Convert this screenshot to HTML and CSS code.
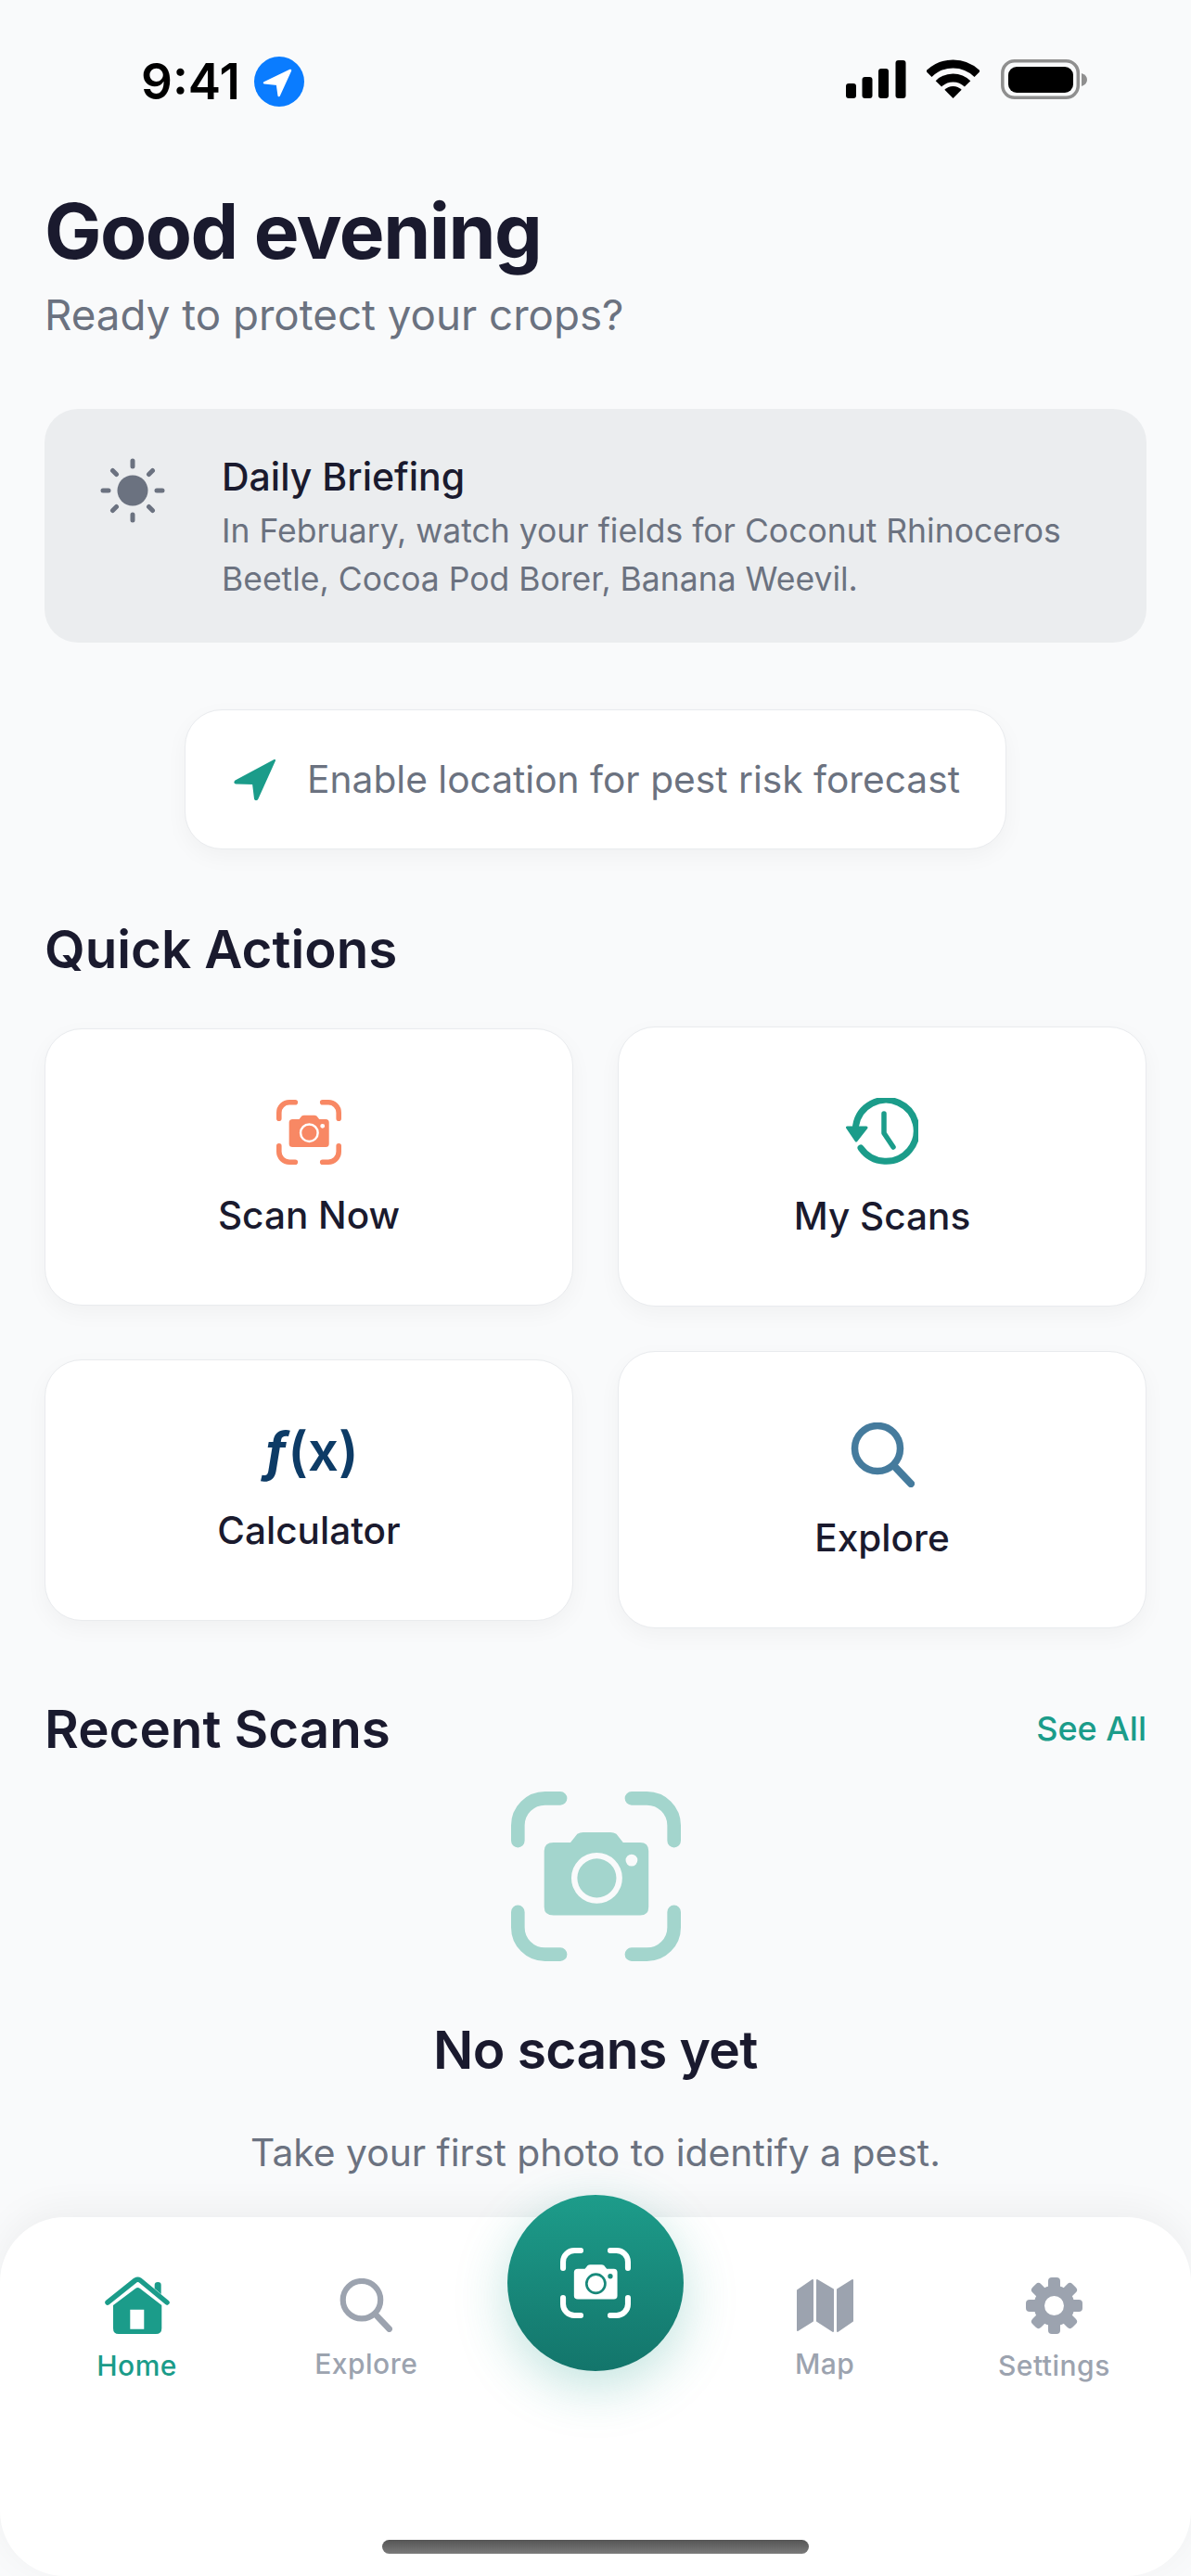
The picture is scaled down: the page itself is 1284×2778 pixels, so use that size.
FILE: index.html
```html
<!DOCTYPE html>
<html lang="en">
<head>
<meta charset="utf-8">
<title>Home</title>
<link rel="stylesheet" href="styles.css">
</head>
<body>
<svg class="defs" width="0" height="0" aria-hidden="true">
  <symbol id="scan-cam" viewBox="0 0 100 100">
    <path class="brackets" d="M4 29V20A16 16 0 0 1 20 4H29M71 4H80A16 16 0 0 1 96 20V29M96 71V80A16 16 0 0 1 80 96H71M29 96H20A16 16 0 0 1 4 80V71"/>
    <path fill="currentColor" fill-rule="evenodd" d="M25 30H35L39 25Q40.500 24 42.500 24H58.500Q60.500 24 62 25L66 30H76Q81 30 81 35V68Q81 73 76 73H25Q19.500 73 19.500 68V35Q19.500 30 25 30ZM35.500 51a15 15 0 1 0 30 0a15 15 0 1 0 -30 0ZM39 51a11.500 11.500 0 1 0 23 0a11.500 11.500 0 1 0 -23 0ZM67.500 40.500a3.500 3.500 0 1 0 7 0a3.500 3.500 0 1 0 -7 0Z"/>
  </symbol>
  <symbol id="search" viewBox="0 0 69 70">
    <circle cx="29" cy="28" r="24.500" fill="none" stroke="currentColor" stroke-width="7.500"/>
    <path d="M47 47L65 66" fill="none" stroke="currentColor" stroke-width="8" stroke-linecap="round"/>
  </symbol>
</svg>
<div class="page">
  <header class="status">
    <div class="status-left">
      <span class="clock">9:41</span>
      <svg class="loc-badge" viewBox="0 0 54 54"><circle cx="27" cy="27" r="27" fill="#0a7cff"/><path d="M39 15L11 28.300L25 29.800L26.700 42Z" fill="#fff" stroke="#fff" stroke-width="2.500" stroke-linejoin="round"/></svg>
    </div>
    <div class="status-right">
      <svg class="signal" viewBox="0 0 65 41"><rect x="0" y="25" width="11" height="16" rx="3"/><rect x="17.500" y="18" width="11" height="23" rx="3"/><rect x="35" y="9" width="11" height="32" rx="3"/><rect x="53.500" y="0" width="11" height="41" rx="3"/></svg>
      <svg class="wifi" viewBox="0 0 57 42"><path d="M2.300 15.800A37 37 0 0 1 54.700 15.800M12.900 26.400A22 22 0 0 1 44.100 26.400" fill="none" stroke="#000" stroke-width="9"/><path d="M28.500 42L19.300 32.800A13 13 0 0 1 37.700 32.800Z"/></svg>
      <svg class="battery" viewBox="0 0 93 43"><rect x="1.800" y="1.800" width="81.500" height="39.400" rx="13" fill="none" stroke="#8f8f8f" stroke-width="3.500"/><rect x="8" y="8" width="70" height="28" rx="9"/><path d="M87 15Q93 17 93 22Q93 27 87 29Z" fill="#8f8f8f"/></svg>
    </div>
  </header>

  <main class="content">
    <h1 class="greeting">Good evening</h1>
    <p class="subtitle">Ready to protect your crops?</p>

    <section class="briefing">
      <svg class="sun" viewBox="0 0 70 70">
        <circle cx="35" cy="35" r="16.500" fill="#6b7280"/>
        <g stroke="#6b7280" stroke-width="5" stroke-linecap="round">
          <path d="M35 3V9M35 61V67M3 35H9M61 35H67M13.500 13.500L17.500 17.500M52.500 52.500L56.500 56.500M56.500 13.500L52.500 17.500M17.500 52.500L13.500 56.500"/>
        </g>
      </svg>
      <div class="briefing-text">
        <h2 class="briefing-title">Daily Briefing</h2>
        <p class="briefing-body">In February, watch your fields for Coconut Rhinoceros Beetle, Cocoa Pod Borer, Banana Weevil.</p>
      </div>
    </section>

    <div class="location-pill">
      <svg class="pill-arrow" viewBox="0 0 47 46"><path d="M45 2L3 24.500Q1.500 26 3.500 26.500L22 27L24 43.500Q25.500 45 26.500 43Z" fill="#1b9c8a" stroke="#1b9c8a" stroke-width="2" stroke-linejoin="round"/></svg>
      <span>Enable location for pest risk forecast</span>
    </div>

    <h2 class="section-title quick-title">Quick Actions</h2>
    <div class="actions">
      <div class="action-col action-col-left">
        <a class="action-card">
          <svg class="icon-scan"><use href="#scan-cam"/></svg>
          <span class="action-label">Scan Now</span>
        </a>
        <a class="action-card">
          <span class="icon-fx"><span class="icon-fx-f">ƒ</span>(x)</span>
          <span class="action-label">Calculator</span>
        </a>
      </div>
      <div class="action-col action-col-right">
        <a class="action-card">
          <svg class="icon-history" viewBox="0 0 78 73">
            <path d="M10.600 30A33 33 0 1 1 16 54" fill="none" stroke="#1b9c8a" stroke-width="7" stroke-linecap="round"/>
            <path d="M1.500 32H22L11 46Z" fill="#1b9c8a" stroke="#1b9c8a" stroke-width="3" stroke-linejoin="round"/>
            <path d="M41 17V38L51 53" fill="none" stroke="#1b9c8a" stroke-width="5.500" stroke-linecap="round" stroke-linejoin="round"/>
          </svg>
          <span class="action-label">My Scans</span>
        </a>
        <a class="action-card">
          <svg class="icon-search"><use href="#search"/></svg>
          <span class="action-label">Explore</span>
        </a>
      </div>
    </div>

    <div class="recent-head">
      <h2 class="section-title">Recent Scans</h2>
      <a class="see-all">See All</a>
    </div>
    <div class="empty">
      <svg class="empty-icon"><use href="#scan-cam"/></svg>
      <h3 class="empty-title">No scans yet</h3>
      <p class="empty-body">Take your first photo to identify a pest.</p>
    </div>
  </main>

  <nav class="tabbar">
    <a class="tab tab-active">
      <svg class="tab-home" viewBox="0 0 70 62">
        <path d="M3 28L33 4Q35.500 2.500 38 4L67 28" fill="none" stroke="#1b9c8a" stroke-width="5.500" stroke-linecap="round" stroke-linejoin="round"/>
        <path d="M53.700 9A3.500 3 0 0 1 60.700 9V19L53.700 13Z" fill="#1b9c8a"/>
        <path fill="#1b9c8a" fill-rule="evenodd" d="M33 13Q35.500 11 38 13L61.300 31V56Q61.300 62 55 62H15Q9 62 9 56V31ZM27.300 35.700V56.700H42.300V35.700Z"/>
      </svg>
      <span>Home</span>
    </a>
    <a class="tab">
      <svg class="tab-search"><use href="#search"/></svg>
      <span>Explore</span>
    </a>
    <div class="tab-gap"></div>
    <a class="tab">
      <svg class="tab-map" viewBox="0 0 61 57">
        <g fill="#9ca3af" stroke="#9ca3af" stroke-width="2" stroke-linejoin="round">
          <path d="M1 12L17 1V45L1 55Z"/>
          <path d="M22 1L39 11V56L22 45Z"/>
          <path d="M44 11L60 1V45L44 56Z"/>
        </g>
      </svg>
      <span>Map</span>
    </a>
    <a class="tab">
      <svg class="tab-gear" viewBox="0 0 61 61">
        <g fill="#9ca3af">
          <circle cx="30.500" cy="30.500" r="22"/>
          <rect x="24" y="0" width="13" height="61" rx="4"/>
          <rect x="24" y="0" width="13" height="61" rx="4" transform="rotate(45 30.500 30.500)"/>
          <rect x="24" y="0" width="13" height="61" rx="4" transform="rotate(90 30.500 30.500)"/>
          <rect x="24" y="0" width="13" height="61" rx="4" transform="rotate(135 30.500 30.500)"/>
        </g>
        <circle cx="30.500" cy="30.500" r="10.500" fill="#fff"/>
      </svg>
      <span>Settings</span>
    </a>
    <button class="fab" type="button" aria-label="Scan">
      <svg class="fab-icon"><use href="#scan-cam"/></svg>
    </button>
    <div class="home-indicator"></div>
  </nav>
</div>
</body>
</html>
```

FILE: styles.css
```css
* { box-sizing: border-box; }
html, body { margin: 0; padding: 0; }
body {
  background: #f9fafb;
  font-family: Inter, "Liberation Sans", sans-serif;
  color: #1a1a2e;
}
.defs { position: absolute; }
.brackets {
  fill: none;
  stroke: currentColor;
  stroke-width: 8;
  stroke-linecap: round;
  stroke-linejoin: round;
}
.page {
  width: 1284px;
  height: 2778px;
  display: flex;
  flex-direction: column;
  overflow: hidden;
}

/* status bar */
.status {
  flex: none;
  height: 202px;
  padding: 61px 112px 0 152px;
  display: flex;
  justify-content: space-between;
  align-items: flex-start;
}
.status-left { display: flex; align-items: center; height: 54px; gap: 15px; }
.clock { font-size: 53px; font-weight: 600; line-height: 54px; color: #000; }
.loc-badge { width: 54px; height: 54px; }
.status-right { display: flex; align-items: flex-start; margin-top: 3px; }
.signal { width: 65px; height: 41px; margin-top: 1px; }
.wifi { width: 57px; height: 42px; margin-left: 22px; }
.battery { width: 93px; height: 43px; margin-left: 23px; }

/* main */
.content {
  flex: 1;
  min-height: 0;
  padding: 0 48px;
  display: flex;
  flex-direction: column;
}
.greeting { margin: 0; font-size: 82px; line-height: 96px; font-weight: 700; letter-spacing: -1.5px; }
.subtitle { margin: 14px 0 0; font-size: 45.7px; line-height: 56px; color: #6b7280; }

.briefing {
  margin-top: 73px;
  height: 252px;
  padding: 49px 60px 0;
  background: #ebedef;
  border-radius: 36px;
  display: flex;
  gap: 61px;
  align-items: flex-start;
}
.sun { flex: none; width: 70px; height: 70px; margin-top: 4px; }
.briefing-title { margin: 0; font-size: 41px; line-height: 48px; font-weight: 500; }
.briefing-body { margin: 9px 0 0; font-size: 35.5px; line-height: 52px; color: #6b7280; }

.location-pill {
  align-self: center;
  margin-top: 72px;
  padding: 49px 49px 48px 51px;
  display: flex;
  align-items: center;
  gap: 33px;
  background: #fff;
  border: 1px solid #e9ebee;
  border-radius: 40px;
  box-shadow: 0 8px 24px rgba(0, 0, 0, 0.04);
  font-size: 40.7px;
  line-height: 52px;
  color: #6b7280;
}
.pill-arrow { flex: none; width: 47px; height: 46px; }

.section-title { margin: 0; font-size: 56.5px; line-height: 68px; font-weight: 600; }
.quick-title { margin-top: 74px; }

.actions { margin-top: 49px; display: grid; grid-template-columns: 1fr 1fr; column-gap: 48px; }
.action-col { display: flex; flex-direction: column; }
.action-col-left { padding-top: 2px; gap: 58px; }
.action-col-right { gap: 48px; }
.action-card {
  padding: 76px 0 72px;
  display: flex;
  flex-direction: column;
  align-items: center;
  gap: 31px;
  background: #fff;
  border: 1px solid #e9ebee;
  border-radius: 40px;
  box-shadow: 0 8px 24px rgba(0, 0, 0, 0.04);
}
.action-label { font-size: 40.5px; line-height: 48px; font-weight: 500; }
.icon-scan { width: 70px; height: 70px; color: #f88864; }
.icon-history { width: 78px; height: 73px; }
.icon-fx {
  height: 53px;
  padding-left: 4px;
  font-size: 58px;
  line-height: 44px;
  font-weight: 600;
  color: #0d3b66;
}
.icon-fx-f { font-style: italic; font-weight: 700; }
.icon-search { width: 69px; height: 70px; color: #457b9d; }

.recent-head { margin-top: 75px; display: flex; justify-content: space-between; align-items: center; }
.see-all { margin-top: -2px; font-size: 36px; font-weight: 500; color: #1b9c8a; }

.empty { margin-top: 33px; display: flex; flex-direction: column; align-items: center; }
.empty-icon { width: 183px; height: 183px; color: #a3d5cd; }
.empty-title { margin: 62px 0 0; font-size: 57px; line-height: 68px; font-weight: 600; letter-spacing: -0.6px; }
.empty-body { margin: 50px 0 0; font-size: 40.8px; line-height: 52px; color: #6b7280; }

/* tab bar */
.tabbar {
  position: relative;
  flex: none;
  height: 387px;
  padding: 64px 24px 0;
  display: grid;
  grid-template-columns: repeat(5, 1fr);
  align-items: start;
  background: #fff;
  border-radius: 70px;
  box-shadow: 0 -8px 40px rgba(0, 0, 0, 0.05);
}
.tab {
  height: 114px;
  display: flex;
  flex-direction: column;
  align-items: center;
  justify-content: center;
  gap: 16px;
  font-size: 30px;
  line-height: 36px;
  font-weight: 500;
  letter-spacing: 0.5px;
  color: #9ca3af;
}
.tab-active { color: #1b9c8a; }
.tab-home { width: 70px; height: 62px; }
.tab-search { width: 57px; height: 58px; color: #9ca3af; }
.tab-map { width: 61px; height: 57px; }
.tab-gear { width: 61px; height: 61px; }
.fab {
  position: absolute;
  top: -24px;
  left: 547px;
  width: 190px;
  height: 190px;
  padding: 0;
  border: 0;
  border-radius: 50%;
  display: flex;
  align-items: center;
  justify-content: center;
  background: linear-gradient(180deg, #1d9c8a, #13756b);
  box-shadow: 0 16px 56px rgba(27, 156, 138, 0.28);
  color: #fff;
}
.fab-icon { width: 76px; height: 76px; }
.home-indicator {
  position: absolute;
  left: 412px;
  bottom: 24px;
  width: 460px;
  height: 15px;
  border-radius: 8px;
  background: linear-gradient(180deg, #555, #7a7a7a);
}
```
